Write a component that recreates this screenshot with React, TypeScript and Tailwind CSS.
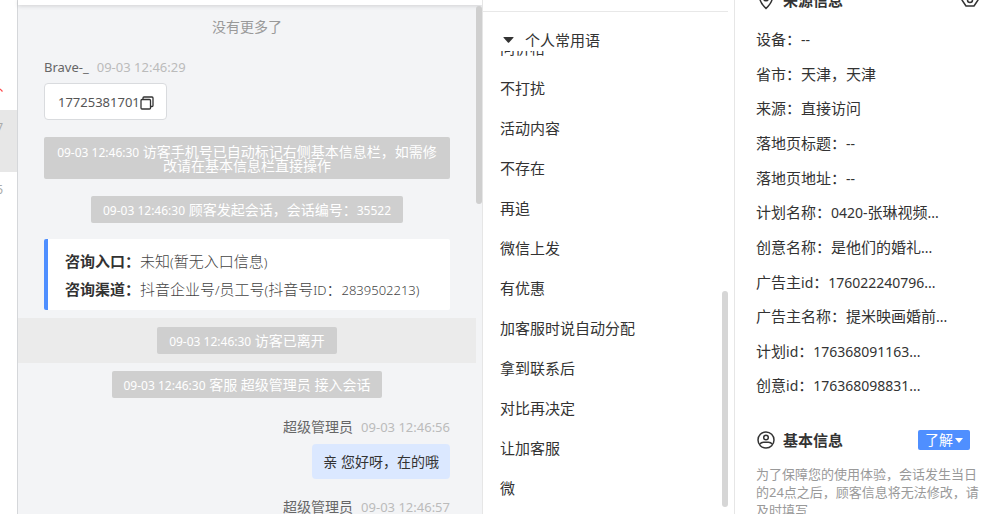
import { ReactNode } from "react"

const phrases = [
  "问价格",
  "不打扰",
  "活动内容",
  "不存在",
  "再追",
  "微信上发",
  "有优惠",
  "加客服时说自动分配",
  "拿到联系后",
  "对比再决定",
  "让加客服",
  "微",
]

const source = [
  ["设备", "--"],
  ["省市", "天津，天津"],
  ["来源", "直接访问"],
  ["落地页标题", "--"],
  ["落地页地址", "--"],
  ["计划名称", "0420-张琳视频..."],
  ["创意名称", "是他们的婚礼..."],
  ["广告主id", "176022240796..."],
  ["广告主名称", "提米映画婚前..."],
  ["计划id", "176368091163..."],
  ["创意id", "176368098831..."],
]

// Latin runs are set a little smaller than the Chinese text around them
const Mixed = ({ text, latin }: { text: string; latin: string }) => (
  <>
    {text.split(/([\x21-\x7e]+(?: [\x21-\x7e]+)*)/).map((part, i) =>
      i % 2 ? <span key={i} className={latin}>{part}</span> : part
    )}
  </>
)

const Notice = ({ text }: { text: string }) => (
  <p className="rounded-xs bg-[#cfcfcf] px-3 py-1.5 text-center text-sm leading-[15px] text-white">
    <Mixed text={text} latin="text-xs leading-none" />
  </p>
)

const Author = ({ name, time }: { name: ReactNode; time: string }) => (
  <div className="flex h-5 items-baseline gap-2 text-sm leading-5 text-[#666]">
    <span>{name}</span>
    <time className="text-[13px] leading-5 text-[#bbb]">{time}</time>
  </div>
)

const Visitors = () => (
  <nav className="w-[18px] shrink-0 overflow-hidden border-r border-[#d5d7da] bg-white text-xs text-[#aaa]">
    <div className="h-[110px] pt-[88px]">
      <svg className="h-1 w-[3px]" viewBox="0 0 3 4" fill="none" stroke="#ff4d4f" strokeWidth="1.2">
        <path d="M0 1l2.500 2.500" />
      </svg>
    </div>
    <div className="flex h-[62px] justify-end bg-[#e7e7e7] pt-2.5 pr-3.5">7</div>
    <div className="flex h-[62px] justify-end pt-2.5 pr-3.5">5</div>
  </nav>
)

const Chat = () => (
  <main className="flex min-w-0 flex-1 flex-col bg-[#f3f4f6]">
    <header className="h-[5px] shrink-0 bg-white shadow-[0_1px_4px_rgba(0,0,0,0.15)]" />
    <div className="flex min-h-0 flex-1">
      <div className="flex min-w-0 flex-1 flex-col overflow-hidden">
        <p className="mt-3 text-center text-sm leading-5 text-[#999]">没有更多了</p>

        <div className="mt-5 flex flex-col items-start px-[26px]">
          <Author name={<span className="text-[13px]">Brave-_</span>} time="09-03 12:46:29" />
          <div className="mt-1.5 flex items-center rounded border border-[#d9dbde] bg-white pt-[9px] pr-3 pb-[7px] pl-[13px] text-[13px] leading-[19px] text-[#555]">
            17725381701
            <button aria-label="复制">
              <svg className="h-[14px] w-[14px]" viewBox="0 0 14 14" fill="none" stroke="#333" strokeWidth="1.300">
                <rect x="1" y="3.500" width="9.500" height="9.500" rx="1" />
                <path d="M3 3.500V2q0-1 1-1h8q1 0 1 1v7.500q0 1-1 1h-1.500" />
              </svg>
            </button>
          </div>
        </div>

        <div className="mx-[26px] mt-[17px] rounded-xs bg-[#cfcfcf] px-2.5 pt-2 pb-[7px] text-center text-sm leading-[13px] text-white">
          <Mixed text="09-03 12:46:30 访客手机号已自动标记右侧基本信息栏，如需修改请在基本信息栏直接操作" latin="text-xs leading-none" />
        </div>

        <div className="mt-[17px] flex justify-center">
          <Notice text="09-03 12:46:30 顾客发起会话，会话编号：35522" />
        </div>

        <dl className="mx-[26px] mt-4 rounded-xs border-l-4 border-[#4f8fff] bg-white px-[17px] pt-2 pb-[7px] text-[15px] leading-7">
          <div className="flex">
            <dt className="font-bold text-[#333]">咨询入口：</dt>
            <dd className="font-light text-[#444]"><Mixed text="未知(暂无入口信息)" latin="text-[13px] leading-none" /></dd>
          </div>
          <div className="flex">
            <dt className="font-bold text-[#333]">咨询渠道：</dt>
            <dd className="font-light text-[#444]"><Mixed text="抖音企业号/员工号(抖音号ID：2839502213)" latin="text-[13px] leading-none" /></dd>
          </div>
        </dl>

        <div className="mt-2 flex justify-center bg-[#ebebeb] py-[9px]">
          <Notice text="09-03 12:46:30 访客已离开" />
        </div>
        <div className="mt-2 flex justify-center">
          <Notice text="09-03 12:46:30 客服 超级管理员 接入会话" />
        </div>

        <div className="mt-[19px] flex flex-col items-end px-[26px]">
          <Author name="超级管理员" time="09-03 12:46:56" />
          <p className="mt-[7px] mb-[18px] rounded bg-[#dbe8ff] px-[11px] py-2 text-sm leading-[19px] text-[#333]">亲 您好呀，在的哦</p>
          <Author name="超级管理员" time="09-03 12:46:57" />
        </div>
      </div>
      <div className="w-1.5 shrink-0 pt-px">
        <div className="h-[198px] rounded-full bg-[#cfcfcf]" />
      </div>
    </div>
  </main>
)

const Phrases = () => (
  <section className="flex w-[253px] shrink-0 flex-col border-x border-[#e6e6e6] bg-white text-[15px] text-[#333]">
    <div className="mr-1.5 h-3 shrink-0 border-b border-[#e8e8e8]" />
    <button className="mt-[17px] flex h-[22px] shrink-0 items-center gap-[11px] pl-5 text-left">
      <svg className="h-1.5 w-[11px]" viewBox="0 0 11 6" fill="#333">
        <path d="M1 0h9q1 0 .4.8L6.100 5.500q-.6.6-1.200 0L.6.8Q0 0 1 0z" />
      </svg>
      个人常用语
    </button>
    <div className="flex min-h-0 flex-1">
      <ul className="min-w-0 flex-1 overflow-hidden pl-[17px]">
        {phrases.map((phrase, i) => (
          <li key={phrase} className={i === 0 ? "-mt-[23px] leading-10" : "leading-10"}>{phrase}</li>
        ))}
      </ul>
      <div className="mr-1.5 flex w-1.5 shrink-0 flex-col justify-end pb-[7px]">
        <div className="h-[216px] rounded-full bg-[#d6d6d6]" />
      </div>
    </div>
  </section>
)

const Info = () => (
  <aside className="w-[257px] shrink-0 overflow-hidden bg-white pl-[21px] text-[15px] text-[#333]">
    <div className="-mt-[11px] flex h-[22px] items-center pr-[13px]">
      <svg className="h-5 w-5" viewBox="0 0 20 20" fill="none" stroke="#333" strokeWidth="1.500">
        <path d="M10 18.500C6 14.500 3.800 11.500 3.800 8.200a6.200 6.200 0 0 1 12.400 0C16.200 11.500 14 14.500 10 18.500z" />
        <circle cx="10" cy="8.500" r="2.300" />
      </svg>
      <h2 className="ml-[7px] flex-1 font-bold">来源信息</h2>
      <button aria-label="设置">
        <svg className="h-[18px] w-[18px]" viewBox="0 0 18 18" fill="none" stroke="#333" strokeWidth="1.500" strokeLinejoin="round">
          <path d="M5 2h8l4 7-4 6H5L1 9z" />
          <circle cx="9" cy="9" r="2.500" />
        </svg>
      </button>
    </div>

    <dl className="mt-[11px] grid h-[381px] auto-rows-fr items-center">
      {source.map(([label, value]) => (
        <div key={label} className="flex">
          <dt><Mixed text={label + "："} latin="text-sm leading-none" /></dt>
          <dd><Mixed text={value} latin="text-sm leading-none" /></dd>
        </div>
      ))}
    </dl>

    <div className="mt-[26px] flex h-[22px] items-center pr-[22px]">
      <svg className="h-5 w-5" viewBox="0 0 20 20" fill="none" stroke="#333" strokeWidth="1.500">
        <circle cx="10" cy="10" r="8" />
        <circle cx="10" cy="7.500" r="2.300" />
        <path d="M3.800 14.200c1-1.500 2.200-2 3.700-2h5c1.500 0 2.700.5 3.700 2" />
      </svg>
      <h2 className="ml-[7px] flex-1 font-bold">基本信息</h2>
      <button className="flex h-5 items-center gap-0.5 rounded-xs bg-[#4f8fff] px-[7px] text-sm leading-5 text-white">
        了解
        <svg className="h-[5px] w-2" viewBox="0 0 8 5" fill="currentColor">
          <path d="M0 0h8L4 5z" />
        </svg>
      </button>
    </div>
    <p className="mt-[14px] pr-2 text-[13px] leading-[18px] text-[#999]">
      为了保障您的使用体验，会话发生当日的24点之后，顾客信息将无法修改，请及时填写
    </p>
  </aside>
)

export default function App() {
  return (
    <div className="flex h-screen overflow-hidden bg-white font-['Noto_Sans','Noto_Sans_CJK_SC',sans-serif]">
      <Visitors />
      <Chat />
      <Phrases />
      <Info />
    </div>
  )
}
